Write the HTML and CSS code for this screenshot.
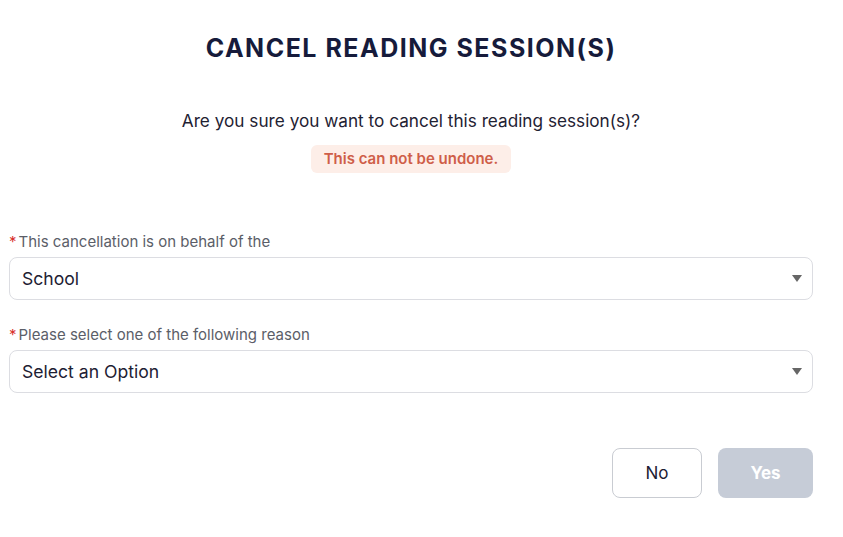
FILE: index.html
```html
<!DOCTYPE html>
<html>
<head>
<meta charset="utf-8">
<link rel="stylesheet" href="styles.css">
</head>
<body>
<div class="modal">
  <h1 class="title">CANCEL READING SESSION(S)</h1>
  <p class="question">Are you sure you want to cancel this reading session(s)?</p>
  <div class="warn-row"><span class="warn">This can not be undone.</span></div>
  <div class="field first">
    <label class="label"><span class="req">*</span>This cancellation is on behalf of the</label>
    <div class="select"><span>School</span><span class="caret"></span></div>
  </div>
  <div class="field">
    <label class="label"><span class="req">*</span>Please select one of the following reason</label>
    <div class="select"><span>Select an Option</span><span class="caret"></span></div>
  </div>
  <div class="actions">
    <button class="btn btn-no">No</button>
    <button class="btn btn-yes">Yes</button>
  </div>
</div>
</body>
</html>
```
FILE: styles.css
```css
html, body { margin: 0; padding: 0; background: #fff; }
body { font-family: Inter, "Noto Sans", sans-serif; color: #1d2033; }
.modal { width: 804px; margin-left: 9px; padding-top: 30px; }
.title { margin: 0; text-align: center; font-size: 25px; font-weight: 700; letter-spacing: 1.5px; color: #161b3b; line-height: 36px; }
.question { margin: 43px 0 0; text-align: center; font-size: 17.2px; line-height: 24px; color: #1f2233; }
.warn-row { display: flex; justify-content: center; margin-top: 12px; }
.warn { background: #fdeee8; color: #cf5e49; font-weight: 600; font-size: 15px; padding: 0 13px; height: 28px; line-height: 28px; border-radius: 6px; }
.field { margin-top: 26px; }
.field.first { margin-top: 60px; }
.label { display: block; font-size: 15px; color: #5b5e68; line-height: 18px; margin-bottom: 6px; }
.req { color: #d8312c; margin-right: 2px; }
.select { height: 41px; border: 1px solid #dcdde2; border-radius: 8px; display: flex; align-items: center; justify-content: space-between; padding: 0 10px 0 12px; font-size: 17.6px; color: #1d2033; }
.caret { width: 0; height: 0; border-left: 5px solid transparent; border-right: 5px solid transparent; border-top: 7px solid #666; }
.actions { display: flex; justify-content: flex-end; gap: 16px; margin-top: 55px; }
.btn { font-family: inherit; height: 50px; border-radius: 8px; font-size: 17px; cursor: pointer; }
.btn-no { width: 90px; background: #fff; border: 1px solid #c9ccd2; color: #1d2033; }
.btn-yes { width: 95px; background: #c6ccd7; border: none; color: #fff; font-weight: 700; }
```
